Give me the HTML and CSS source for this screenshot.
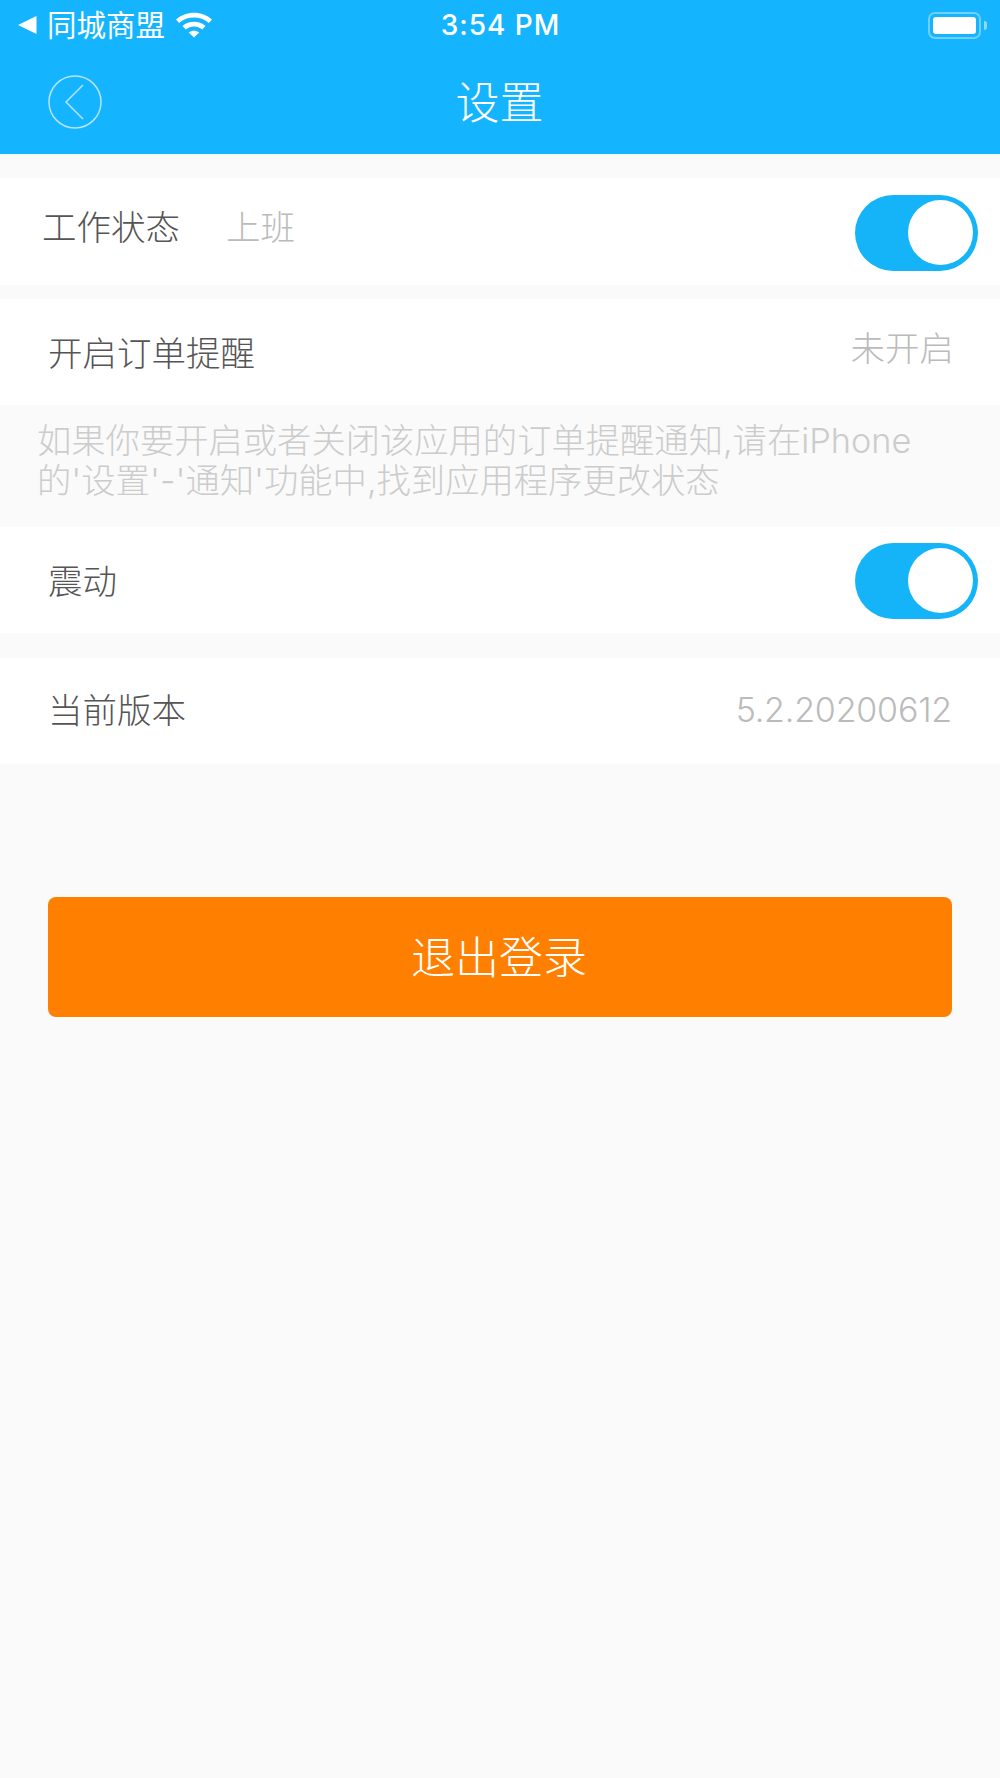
FILE: index.html
```html
<!DOCTYPE html>
<html lang="zh-CN">
<head>
    <meta charset="UTF-8">
    <meta name="viewport" content="width=device-width, initial-scale=1.0">
    <title>设置</title>
    <link rel="stylesheet" href="styles.css">
</head>
<body>
    <header class="header">
        <div class="status-bar">
            <div class="status-left">
                <svg class="back-arrow" width="20" height="20" viewBox="0 0 20 20"><path d="M0 10 L18.500 1 V19 Z" fill="#fff"/></svg>
                <span class="carrier">同城商盟</span>
                <svg class="wifi" width="38" height="28" viewBox="0 0 38 28">
                    <path d="M1 9.500 C11 0.500 27 0.500 37 9.500 L33.800 13 C25.500 5.800 12.500 5.800 4.200 13 Z" fill="#fff"/>
                    <path d="M7.500 16 C14 10.400 24 10.400 30.500 16 L27.200 19.500 C22.500 15.600 15.500 15.600 10.800 19.500 Z" fill="#fff"/>
                    <path d="M13.800 22.500 C16.800 20.200 21.200 20.200 24.200 22.500 L19 27.500 Z" fill="#fff"/>
                </svg>
            </div>
            <span class="time">3:54 PM</span>
            <div class="battery">
                <div class="battery-body"><div class="battery-level"></div></div>
                <div class="battery-cap"></div>
            </div>
        </div>
        <div class="nav-bar">
            <svg class="nav-back" width="56" height="56" viewBox="0 0 56 56">
                <circle cx="27" cy="28" r="26" fill="none" stroke="#b5e5fc" stroke-width="1.500"/>
                <path d="M35 11 L18 28 L35 45" fill="none" stroke="#b5e5fc" stroke-width="1.500"/>
            </svg>
            <h1 class="nav-title">设置</h1>
        </div>
    </header>

    <section class="row row-status">
        <span class="label label-status">工作状态</span>
        <span class="status-value">上班</span>
        <div class="switch"><div class="switch-knob"></div></div>
    </section>

    <section class="row row-remind">
        <span class="label">开启订单提醒</span>
        <span class="value value-remind">未开启</span>
    </section>

    <p class="note">如果你要开启或者关闭该应用的订单提醒通知,请在iPhone的'设置'-'通知'功能中,找到应用程序更改状态</p>

    <section class="row row-shake">
        <span class="label">震动</span>
        <div class="switch"><div class="switch-knob"></div></div>
    </section>

    <section class="row row-version">
        <span class="label label-version">当前版本</span>
        <span class="value value-version">5.2.20200612</span>
    </section>

    <a href="#" class="logout">退出登录</a>
</body>
</html>
```

FILE: styles.css
```css
body {
    font-family: Inter, "Noto Sans CJK SC", sans-serif;
    font-weight: 300;
    margin: 0;
    min-height: 1778px;
    background-color: #fafafa;
    color: #555;
}
.header {
    height: 154px;
    background-color: #15b4ff;
    color: white;
}
.status-bar {
    display: grid;
    grid-template-columns: 1fr auto 1fr;
    align-items: center;
    height: 50px;
    padding: 0 13px 0 18px;
}
.status-left {
    display: flex;
    align-items: center;
}
.back-arrow {
    margin-right: 9px;
}
.carrier {
    font-size: 29.500px;
    font-weight: 400;
    line-height: 50px;
}
.wifi {
    margin-left: 10px;
    margin-bottom: 3px;
}
.time {
    margin-right: 4px;
    font-size: 28px;
    font-weight: 500;
    letter-spacing: 1px;
}
.battery {
    display: flex;
    align-items: center;
    justify-self: end;
}
.battery-body {
    width: 53px;
    height: 27px;
    padding: 3px;
    box-sizing: border-box;
    border: 2px solid #6fd0fd;
    border-radius: 7px;
}
.battery-level {
    height: 100%;
    background-color: white;
    border-radius: 3px;
}
.battery-cap {
    width: 3px;
    height: 9px;
    margin-left: 3px;
    background-color: #8fdafd;
    border-radius: 0 4px 4px 0;
}
.nav-bar {
    display: grid;
    grid-template-columns: 1fr auto 1fr;
    align-items: center;
    height: 104px;
    padding-left: 48px;
    padding-right: 49px;
}
.nav-title {
    margin: 0 0 4px;
    font-size: 44px;
    font-weight: 300;
}
.row {
    display: flex;
    align-items: center;
    justify-content: space-between;
    height: 106px;
    padding: 0 48px;
    background-color: white;
    font-size: 34.500px;
}
.row-status {
    height: 107px;
    margin-top: 24px;
    padding-left: 42px;
    padding-right: 22px;
    justify-content: flex-start;
}
.row-remind {
    margin-top: 14px;
    padding-right: 46px;
}
.row-shake {
    padding-right: 22px;
}
.row-version {
    margin-top: 25px;
}
.label {
    margin-bottom: 3px;
}
.label-status {
    margin-bottom: 14px;
}
.label-version {
    margin-bottom: 7px;
}
.status-value {
    margin-left: 46px;
    margin-bottom: 14px;
    color: #bbb;
}
.value {
    color: #bbb;
}
.value-remind {
    margin-bottom: 12px;
}
.value-version {
    font-size: 34px;
    letter-spacing: -0.200px;
    margin-bottom: 3px;
}
.switch {
    width: 123px;
    height: 76px;
    margin-left: auto;
    margin-top: 1px;
    padding: 5px;
    box-sizing: border-box;
    display: flex;
    justify-content: flex-end;
    background-color: #15b4f9;
    border-radius: 38px;
}
.row-status .switch {
    margin-top: 3px;
}
.switch-knob {
    width: 65px;
    height: 65px;
    background-color: white;
    border-radius: 50%;
}
.note {
    height: 122px;
    margin: 0;
    padding: 16px 80px 0 37px;
    box-sizing: border-box;
    font-size: 34.300px;
    line-height: 40px;
    color: #ccc;
}
.logout {
    display: flex;
    align-items: center;
    justify-content: center;
    height: 120px;
    padding: 0 2px 4px 0;
    box-sizing: border-box;
    margin: 133px 48px 0;
    background-color: #ff8000;
    border-radius: 8px;
    color: white;
    font-size: 44px;
    text-decoration: none;
}
```
